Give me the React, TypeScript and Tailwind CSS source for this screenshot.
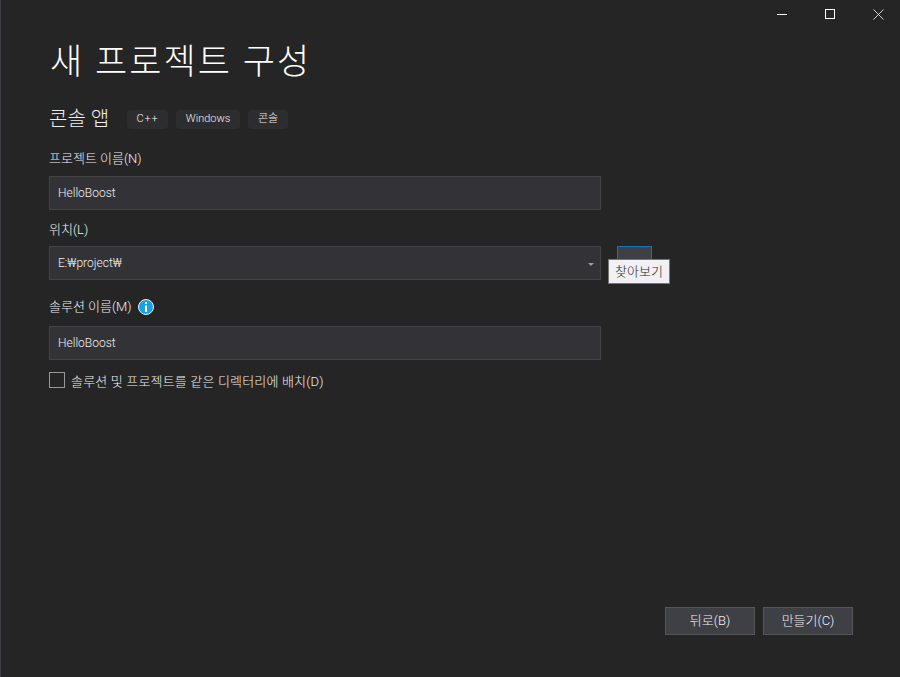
import React from "react";

const font = { fontFamily: 'Roboto, "Noto Sans CJK KR", "Noto Sans", sans-serif' };

function Field({ value, arrow }: { value: string; arrow?: boolean }) {
  return (
    <div className="flex h-[34px] w-[552px] items-center justify-between border border-[#434346] bg-[#333337] pl-2 pr-[6px] text-[12px] font-light text-[#f1f1f1]">
      <span>{value}</span>
      {arrow && <span className="mt-[2px] h-0 w-0 border-x-[3.5px] border-t-[3px] border-x-transparent border-t-[#999999]" />}
    </div>
  );
}

export default function App() {
  return (
    <div style={font} className="relative flex h-[677px] w-[900px] flex-col overflow-hidden border-l border-[#3f3f46] bg-[#252526] text-[#f1f1f1]">
      <div className="mr-[-2px] flex h-[28px] justify-end">
        <div className="flex h-[28px] w-[48px] items-center justify-center">
          <span className="h-px w-[10px] bg-white" />
        </div>
        <div className="flex h-[28px] w-[48px] items-center justify-center">
          <span className="h-[10px] w-[10px] border border-white" />
        </div>
        <div className="flex h-[28px] w-[48px] items-center justify-center">
          <svg width="11" height="11" viewBox="0 0 11 11" stroke="#d0d0d0" strokeWidth="1"><path d="M0.5 0.5 10.5 10.5M10.5 0.5 0.5 10.5" /></svg>
        </div>
      </div>

      <div className="flex flex-1 flex-col pl-[48px]">
        <h1 className="ml-[1px] mt-[11px] h-[48px] text-[35px] font-light leading-[48px] tracking-[2.1px] text-white">새 프로젝트 구성</h1>

        <div className="mt-[20px] flex h-[24px] items-center">
          <span className="text-[20px] font-light leading-[24px] text-[#f1f1f1]">콘솔 앱</span>
          <div className="ml-[18px] flex gap-[8px] text-[11px] font-light">
            <span className="flex h-[19px] w-[41px] items-center justify-center rounded-[4px] bg-[#2d2d30] tracking-[0.8px]">C++</span>
            <span className="flex h-[19px] w-[64px] items-center justify-center rounded-[4px] bg-[#2d2d30]">Windows</span>
            <span className="flex h-[19px] w-[40px] items-center justify-center rounded-[4px] bg-[#2d2d30]">콘솔</span>
          </div>
        </div>

        <label className="mt-[19px] h-[18px] text-[13px] font-light leading-[18px]">프로젝트 이름(N)</label>
        <div className="mt-[8px]"><Field value="HelloBoost" /></div>

        <label className="mt-[11px] h-[18px] text-[13px] font-light leading-[18px]">위치(L)</label>
        <div className="relative mt-[7px] flex items-start">
          <Field value="E:₩project₩" arrow />
          <div className="ml-[16px] h-[34px] w-[35px] border border-[#007acc] bg-[#3f3f46]" />
          <div className="absolute left-[559px] top-[13px] flex h-[25px] w-[62px] items-center justify-center border border-[#767676] bg-[#f0f0f5] text-[13px] font-light text-[#1e1e1e]">찾아보기</div>
        </div>

        <div className="mt-[17px] flex h-[20px] items-center text-[13px] font-light">
          <span>솔루션 이름(M)</span>
          <svg className="ml-[6px]" width="16" height="16" viewBox="0 0 16 16">
            <circle cx="8" cy="8" r="7.5" fill="#1ba1e2" stroke="#e8f4fb" strokeWidth="1" />
            <rect x="7" y="3" width="2" height="2" fill="#fff" />
            <rect x="7" y="6.5" width="2" height="6.5" fill="#fff" />
          </svg>
        </div>
        <div className="mt-[9px]"><Field value="HelloBoost" /></div>

        <div className="mt-[12px] flex h-[16px] items-center text-[13px] font-light">
          <span className="h-[16px] w-[16px] border border-[#999999]" />
          <span className="ml-[6px] mt-[3px] tracking-[0.18px]">솔루션 및 프로젝트를 같은 디렉터리에 배치(D)</span>
        </div>

        <div className="mb-[42px] mt-auto flex justify-end gap-[8px] pr-[47px] text-[13px] font-light">
          <button className="h-[28px] w-[90px] border border-[#555555] bg-[#3f3f46] text-[#f1f1f1]">뒤로(B)</button>
          <button className="h-[28px] w-[90px] border border-[#555555] bg-[#3f3f46] text-[#f1f1f1]">만들기(C)</button>
        </div>
      </div>
    </div>
  );
}
